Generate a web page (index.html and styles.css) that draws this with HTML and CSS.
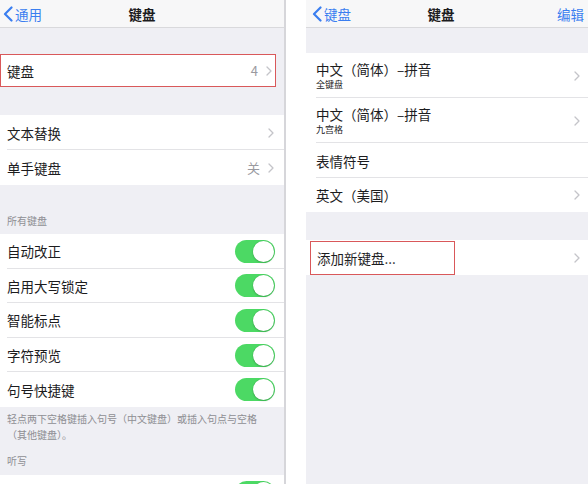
FILE: index.html
```html
<!DOCTYPE html>
<html lang="zh-CN">
<head>
<meta charset="utf-8">
<title>键盘</title>
<link rel="stylesheet" href="styles.css">
</head>
<body>
<div class="screen">
  <section class="panel left">
    <header class="nav">
      <a class="back"><svg class="back-ico" viewBox="0 0 10 16" width="10" height="16"><polyline points="8.5,1.5 2,8 8.5,14.5"/></svg><span>通用</span></a>
      <div class="title">键盘</div>
    </header>
    <div class="gap g27"></div>
    <div class="row hl r33"><span class="label">键盘</span><span class="value">4</span><svg class="chev" viewBox="0 0 6 10" width="6" height="10"><polyline points="1,1 5,5 1,9"/></svg></div>
    <div class="gap g28"></div>
    <div class="row r35 sep"><span class="label">文本替换</span><svg class="chev" viewBox="0 0 6 10" width="6" height="10"><polyline points="1,1 5,5 1,9"/></svg></div>
    <div class="row r35"><span class="label">单手键盘</span><span class="value">关</span><svg class="chev" viewBox="0 0 6 10" width="6" height="10"><polyline points="1,1 5,5 1,9"/></svg></div>
    <div class="section-head h49">所有键盘</div>
    <div class="row rt sep"><span class="label">自动改正</span><span class="toggle"><span class="knob"></span></span></div>
    <div class="row rt sep"><span class="label">启用大写锁定</span><span class="toggle"><span class="knob"></span></span></div>
    <div class="row rt sep"><span class="label">智能标点</span><span class="toggle"><span class="knob"></span></span></div>
    <div class="row rt sep"><span class="label">字符预览</span><span class="toggle"><span class="knob"></span></span></div>
    <div class="row rt"><span class="label">句号快捷键</span><span class="toggle"><span class="knob"></span></span></div>
    <div class="footnote">轻点两下空格键插入句号（中文键盘）或插入句点与空格（其他键盘）。</div>
    <div class="section-head h31">听写</div>
    <div class="row rt"><span class="label"></span><span class="toggle"><span class="knob"></span></span></div>
  </section>
  <section class="panel right">
    <header class="nav">
      <a class="back"><svg class="back-ico" viewBox="0 0 10 16" width="10" height="16"><polyline points="8.5,1.5 2,8 8.5,14.5"/></svg><span>键盘</span></a>
      <div class="title">键盘</div>
      <a class="edit">编辑</a>
    </header>
    <div class="gap g26"></div>
    <div class="row r45 sep inset">
      <div class="stack"><span class="label">中文（简体）–拼音</span><span class="sub">全键盘</span></div>
      <svg class="chev" viewBox="0 0 6 10" width="6" height="10"><polyline points="1,1 5,5 1,9"/></svg>
    </div>
    <div class="row r45 sep inset">
      <div class="stack"><span class="label">中文（简体）–拼音</span><span class="sub">九宫格</span></div>
      <svg class="chev" viewBox="0 0 6 10" width="6" height="10"><polyline points="1,1 5,5 1,9"/></svg>
    </div>
    <div class="row r35 sep inset"><span class="label">表情符号</span></div>
    <div class="row r34 inset"><span class="label">英文（美国）</span><svg class="chev" viewBox="0 0 6 10" width="6" height="10"><polyline points="1,1 5,5 1,9"/></svg></div>
    <div class="gap g28"></div>
    <div class="row r35 inset add"><span class="label addbox">添加新键盘...</span><svg class="chev" viewBox="0 0 6 10" width="6" height="10"><polyline points="1,1 5,5 1,9"/></svg></div>
    <div class="fill"></div>
  </section>
</div>
</body>
</html>
```

FILE: styles.css
```css
* { box-sizing: border-box; }
html, body { margin: 0; padding: 0; background: #ffffff; }
body {
  font-family: "Noto Sans CJK SC", "Noto Sans", sans-serif;
  color: #1c1c1e;
  width: 588px;
  height: 484px;
  overflow: hidden;
}
.screen {
  display: flex;
  gap: 20px;
  height: 484px;
}
.panel {
  display: flex;
  flex-direction: column;
  background: #efeff4;
  height: 484px;
  overflow: hidden;
}
.panel.left {
  width: 286px;
  border-right: 2px solid #d6d6da;
}
.panel.right {
  flex: 1;
}
.nav {
  position: relative;
  height: 28px;
  flex: 0 0 28px;
  background: #f7f7f8;
  border-bottom: 1px solid #d9d9dc;
  display: flex;
  align-items: center;
}
.back {
  display: flex;
  align-items: center;
  gap: 2px;
  color: #3a7ef0;
  font-size: 13.5px;
  padding-left: 3px;
}
.right .back { padding-left: 6px; }
.back-ico polyline {
  fill: none;
  stroke: #3a7ef0;
  stroke-width: 2.2;
  stroke-linecap: round;
  stroke-linejoin: round;
}
.title {
  position: absolute;
  left: 0;
  right: 0;
  top: 0;
  bottom: 0;
  display: flex;
  align-items: center;
  justify-content: center;
  font-size: 13.5px;
  font-weight: 700;
  pointer-events: none;
}
.right .title { padding-right: 12px; }
.edit {
  margin-left: auto;
  color: #3a7ef0;
  font-size: 13.5px;
  padding-right: 4px;
}
.gap { flex: 0 0 auto; }
.g26 { height: 25px; }
.g27 { height: 26px; }
.g28 { height: 28px; }
.row {
  flex: 0 0 auto;
  position: relative;
  display: flex;
  align-items: center;
  background: #ffffff;
  padding: 0 10px 0 7px;
  font-size: 13.5px;
}
.row .label { flex: 1; }
.r33 { height: 33px; }
.r34 { height: 34px; }
.r35 { height: 35px; }
.r45 { height: 45px; }
.rt { height: 34.6px; }
.row.sep::after {
  content: "";
  position: absolute;
  left: 7px;
  right: 0;
  bottom: 0;
  height: 1px;
  background: #e3e3e6;
}
.row.inset { padding-left: 10px; padding-right: 8px; }
.row.inset.sep::after { left: 10px; }
.row.hl {
  outline: 1.5px solid #d9585a;
  outline-offset: -1.5px;
  margin-right: 8px;
  padding-right: 4px;
}
.value {
  color: #9a9aa0;
  font-size: 13px;
  margin-right: 8px;
}
.chev polyline {
  fill: none;
  stroke: #c4c4c9;
  stroke-width: 1.3;
  stroke-linecap: round;
  stroke-linejoin: round;
}
.section-head {
  flex: 0 0 auto;
  display: flex;
  align-items: flex-end;
  padding: 0 7px 6px;
  font-size: 10px;
  color: #8e8e93;
}
.h49 { height: 49px; }
.h31 { height: 31px; padding-bottom: 7px; }
.footnote {
  flex: 0 0 auto;
  padding: 4px 14px 0 7px;
  height: 37px;
  font-size: 10px;
  line-height: 16px;
  color: #8e8e93;
}
.toggle {
  position: relative;
  width: 40px;
  height: 23px;
  border-radius: 12px;
  background: #4cd964;
  margin-right: -1px;
}
.knob {
  position: absolute;
  right: 1px;
  top: 1px;
  width: 21px;
  height: 21px;
  border-radius: 50%;
  background: #ffffff;
  box-shadow: 0 0 0 0.5px rgba(0,0,0,0.08), 0 1px 2px rgba(0,0,0,0.18);
}
.stack {
  flex: 1;
  display: flex;
  flex-direction: column;
  padding-top: 0;
}
.stack .label { line-height: 19px; }
.sub {
  font-size: 9px;
  line-height: 12px;
  color: #1c1c1e;
}
.row.inset.add { padding-left: 4px; }
.addbox {
  flex: 0 0 145px !important;
  height: 34px;
  display: flex;
  align-items: center;
  padding-left: 6px;
  border: 1.5px solid #d9585a;
  margin-right: auto;
}
.fill { flex: 1; }
```
